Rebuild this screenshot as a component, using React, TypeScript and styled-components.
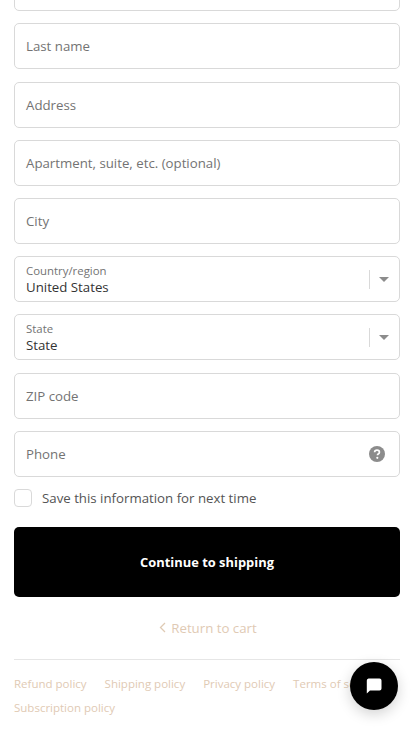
import React from "react";
import styled, { createGlobalStyle } from "styled-components";

const Global = createGlobalStyle`
  html, body { margin: 0; padding: 0; height: 736px; overflow: hidden; background: #fff; }
  body { font-family: "Open Sans", "Liberation Sans", sans-serif; -webkit-font-smoothing: antialiased; }
`;

const Page = styled.main`
  width: 414px;
  height: 736px;
  overflow: hidden;
  position: relative;
  box-sizing: border-box;
  padding: 0 14px;
`;

const Form = styled.form`
  display: flex;
  flex-direction: column;
  gap: 12.2px;
  margin-top: -34.8px;
`;

const Field = styled.div`
  box-sizing: border-box;
  height: 46px;
  border: 1px solid #d9d9d9;
  border-radius: 5px;
  background: #fff;
  display: flex;
  align-items: center;
  padding: 0 11px;
  position: relative;
`;

const Placeholder = styled.span`
  flex: 1;
  font-size: 13.25px;
  color: #737373;
`;

const SelectText = styled.div`
  flex: 1;
  display: flex;
  flex-direction: column;
  padding-top: 2px;
`;

const SelectLabel = styled.span`
  font-size: 11.4px;
  line-height: 14px;
  color: #737373;
`;

const SelectValue = styled.span`
  font-size: 13.25px;
  line-height: 17px;
  margin-top: 1px;
  color: #333;
`;

const Caret = styled.div`
  width: 30px;
  height: 19px;
  margin-right: -11px;
  border-left: 1px solid #d9d9d9;
  display: flex;
  align-items: center;
  padding-left: 9px;
  box-sizing: border-box;
`;

const CheckRow = styled.label`
  display: flex;
  align-items: center;
  gap: 10px;
  height: 18px;
`;

const Box = styled.span`
  box-sizing: border-box;
  width: 18px;
  height: 18px;
  border: 1px solid #d9d9d9;
  border-radius: 4px;
  background: #fff;
`;

const CheckLabel = styled.span`
  font-size: 13.25px;
  color: #545454;
`;

const Submit = styled.button`
  display: block;
  width: 100%;
  height: 70px;
  margin-top: 20px;
  border: 0;
  border-radius: 5px;
  background: #000;
  color: #fff;
  font-family: inherit;
  font-size: 12.9px;
  font-weight: 700;
  padding: 1px 0 0;
`;

const Back = styled.a`
  display: flex;
  justify-content: center;
  align-items: center;
  gap: 5px;
  margin-top: 21px;
  height: 20px;
  padding-left: 2px;
  font-size: 13.25px;
  color: #dfcab4;
`;

const Footer = styled.footer`
  margin-top: 21px;
  border-top: 1px solid #e6e6e6;
  padding-top: 14px;
  display: flex;
  flex-direction: column;
  gap: 5px;
`;

const PolicyRow = styled.div`
  display: flex;
  gap: 18px;
  white-space: nowrap;
`;

const Policy = styled.a`
  font-size: 11.5px;
  line-height: 19px;
  color: #dfcab4;
`;

const Chat = styled.button`
  position: absolute;
  left: 350px;
  top: 662px;
  width: 48px;
  height: 48px;
  border: 0;
  padding: 0;
  border-radius: 50%;
  background: #000;
  box-shadow: 0 4px 14px rgba(0, 0, 0, 0.18);
  display: flex;
  align-items: center;
  justify-content: center;
`;

const CaretIcon = () => (
  <svg width="10" height="5" viewBox="0 0 10 5"><path d="M0 0h10L5 5z" fill="#8c8c8c" /></svg>
);

const Select = ({ label, value }: { label: string; value: string }) => (
  <Field>
    <SelectText>
      <SelectLabel>{label}</SelectLabel>
      <SelectValue>{value}</SelectValue>
    </SelectText>
    <Caret><CaretIcon /></Caret>
  </Field>
);

const Input = ({ text, children }: { text: string; children?: React.ReactNode }) => (
  <Field>
    <Placeholder>{text}</Placeholder>
    {children}
  </Field>
);

export default function App() {
  return (
    <Page>
      <Global />
      <Form>
        <Input text="First name" />
        <Input text="Last name" />
        <Input text="Address" />
        <Input text="Apartment, suite, etc. (optional)" />
        <Input text="City" />
        <Select label="Country/region" value="United States" />
        <Select label="State" value="State" />
        <Input text="ZIP code" />
        <Input text="Phone">
          <svg width="16" height="16" viewBox="0 0 16 16" style={{ marginRight: 3 }}>
            <circle cx="8" cy="8" r="8" fill="#8c8c8c" />
            <path d="M5.6 6.2C5.7 4.9 6.7 4.2 8 4.2c1.4 0 2.4.8 2.4 2 0 1-.6 1.5-1.2 1.9-.5.3-.7.6-.7 1.1" fill="none" stroke="#fff" strokeWidth="1.7" />
            <circle cx="8.3" cy="11.8" r="1.1" fill="#fff" />
          </svg>
        </Input>
        <CheckRow>
          <Box />
          <CheckLabel>Save this information for next time</CheckLabel>
        </CheckRow>
      </Form>
      <Submit type="button">Continue to shipping</Submit>
      <Back>
        <svg width="7" height="11" viewBox="0 0 7 11"><path d="M6 1 1.5 5.5 6 10" fill="none" stroke="#dfcab4" strokeWidth="1.3" /></svg>
        Return to cart
      </Back>
      <Footer>
        <PolicyRow>
          <Policy>Refund policy</Policy>
          <Policy>Shipping policy</Policy>
          <Policy>Privacy policy</Policy>
          <Policy>Terms of service</Policy>
        </PolicyRow>
        <PolicyRow>
          <Policy>Subscription policy</Policy>
        </PolicyRow>
      </Footer>
      <Chat aria-label="Chat">
        <svg width="18" height="18" viewBox="0 0 18 18">
          <path d="M3.5 1.5h11a2 2 0 0 1 2 2v8a2 2 0 0 1-2 2H5L1.8 16.6V3.5a2 2 0 0 1 1.7-2z" fill="#fff" />
        </svg>
      </Chat>
    </Page>
  );
}
